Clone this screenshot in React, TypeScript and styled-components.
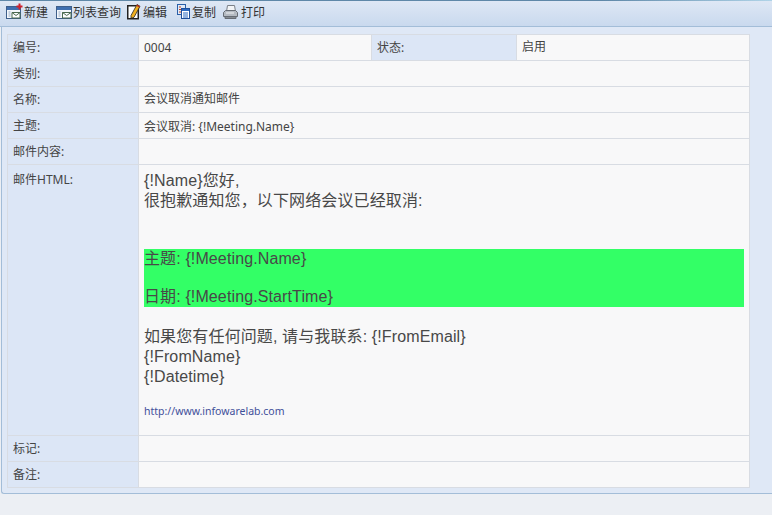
import styled, { createGlobalStyle } from 'styled-components';

const GlobalStyle = createGlobalStyle`
  html, body {
    margin: 0;
    padding: 0;
    background: #eceff4;
  }
  body {
    font-family: 'Noto Sans', 'Noto Sans CJK SC', sans-serif;
  }
`;

function NewIcon() {
  return (
    <svg width="17" height="17" viewBox="0 0 17 17">
      <rect x="0.5" y="3.5" width="14" height="12" fill="#f4f7fb" stroke="#3f5f8a" />
      <rect x="1" y="4" width="13" height="3" fill="#3f6fb0" />
      <path d="M6 9.5h8v5.5H6z" fill="#fff" stroke="#4a6a50" />
      <path d="M6 9.5l4 3 4-3" fill="none" stroke="#4a6a50" />
      <path d="M2.500 9h2M2.500 11h2M2.500 13h2" stroke="#8fa5c0" />
      <path d="M13.500 0.500v6M10.500 3.500h6" stroke="#d0202c" strokeWidth="2" />
    </svg>
  );
}

function ListIcon() {
  return (
    <svg width="16" height="17" viewBox="0 0 16 17">
      <rect x="0.500" y="3.500" width="15" height="12" fill="#f4f7fb" stroke="#3f5f8a" />
      <rect x="1" y="4" width="14" height="3" fill="#3f6fb0" />
      <path d="M6.500 9.500h8.500v5.500H6.500z" fill="#fff" stroke="#4a6a50" />
      <path d="M6.500 9.500l4.200 3 4.300-3" fill="none" stroke="#4a6a50" />
      <path d="M2.500 9h2M2.500 11h2M2.500 13h2" stroke="#8fa5c0" />
    </svg>
  );
}

function EditIcon() {
  return (
    <svg width="14" height="17" viewBox="0 0 14 17">
      <rect x="0.750" y="2.750" width="10.500" height="13" fill="#fff" stroke="#222" strokeWidth="1.500" />
      <path d="M4 12.500L10 1.500l3 1.800-6 11-3 1z" fill="#f0b020" stroke="#222" strokeWidth="0.800" />
      <path d="M10 1.500l3 1.800-.8 1.300-3-1.800z" fill="#b03020" />
    </svg>
  );
}

function CopyIcon() {
  return (
    <svg width="13" height="15" viewBox="0 0 13 15">
      <rect x="0.500" y="0.500" width="8" height="10" fill="#dfeaf8" stroke="#2a5fa8" />
      <path d="M2 3h2M2 5.500h2M2 8h2" stroke="#c04020" />
      <rect x="4.500" y="4.500" width="8" height="10" fill="#fff" stroke="#1f4f9a" />
      <rect x="5" y="5" width="7" height="2" fill="#2a69c0" />
      <path d="M6 9h5M6 11h5M6 13h5" stroke="#2a69c0" />
    </svg>
  );
}

function PrintIcon() {
  return (
    <svg width="15" height="14" viewBox="0 0 15 14">
      <path d="M4.500 0.500h7l1 6h-9z" fill="#f2f4f6" stroke="#7a8088" />
      <path d="M0.500 7.500l2-2h10l2 2v4h-14z" fill="#b4bac2" stroke="#666c74" />
      <path d="M2 11.500h11v2H2z" fill="#858b93" stroke="#666c74" />
      <path d="M3 8h8" stroke="#eef0f2" />
    </svg>
  );
}

const tools = [
  { key: 'new', label: '新建', icon: <NewIcon />, iconGap: 1, after: 8 },
  { key: 'list', label: '列表查询', icon: <ListIcon />, iconGap: 1, after: 6 },
  { key: 'edit', label: '编辑', icon: <EditIcon />, iconGap: 2, after: 10 },
  { key: 'copy', label: '复制', icon: <CopyIcon />, iconGap: 2, after: 7 },
  { key: 'print', label: '打印', icon: <PrintIcon />, iconGap: 3, after: 0 },
];

export default function App() {
  return (
    <Page>
      <GlobalStyle />
      <Toolbar>
        {tools.map(tool => (
          <ToolButton key={tool.key} $iconGap={tool.iconGap} $after={tool.after}>
            {tool.icon}
            <span>{tool.label}</span>
          </ToolButton>
        ))}
      </Toolbar>
      <Panel>
        <Sheet>
          <colgroup>
            <col width="131" />
            <col width="233" />
            <col width="145" />
            <col />
          </colgroup>
          <tbody>
            <Row>
              <Label>编号:</Label>
              <Value>0004</Value>
              <Label>状态:</Label>
              <Value $raised>启用</Value>
            </Row>
            <Row>
              <Label>类别:</Label>
              <Value colSpan={3} />
            </Row>
            <Row>
              <Label>名称:</Label>
              <Value colSpan={3} $raised>会议取消通知邮件</Value>
            </Row>
            <Row>
              <Label>主题:</Label>
              <Value colSpan={3}>会议取消: {'{!Meeting.Name}'}</Value>
            </Row>
            <Row>
              <Label>邮件内容:</Label>
              <Value colSpan={3} />
            </Row>
            <tr>
              <TopLabel>邮件HTML:</TopLabel>
              <MailCell colSpan={3}>
                <MailLine>{'{!Name}'}您好,</MailLine>
                <MailLine>很抱歉通知您，以下网络会议已经取消:</MailLine>
                <Highlight>
                  <MailLine>主题: {'{!Meeting.Name}'}</MailLine>
                  <MailBlank />
                  <MailLine>日期: {'{!Meeting.StartTime}'}</MailLine>
                </Highlight>
                <MailLine>如果您有任何问题, 请与我联系: {'{!FromEmail}'}</MailLine>
                <MailLine>{'{!FromName}'}</MailLine>
                <MailLine>{'{!Datetime}'}</MailLine>
                <SiteLink href="#">http://www.infowarelab.com</SiteLink>
              </MailCell>
            </tr>
            <Row>
              <Label>标记:</Label>
              <Value colSpan={3} />
            </Row>
            <Row>
              <Label>备注:</Label>
              <Value colSpan={3} />
            </Row>
          </tbody>
        </Sheet>
      </Panel>
    </Page>
  );
}

const Page = styled.div`
  width: 772px;
  height: 515px;
  overflow: hidden;
  background: #eceff4;
  color: #444;
`;

const Toolbar = styled.div`
  height: 23px;
  display: flex;
  align-items: center;
  padding: 0 0 3px 6px;
  border-bottom: 1px solid #a3bdd8;
  background:
    linear-gradient(90deg, #5f88a8 78%, #b0d4e8) top / 100% 1px no-repeat,
    linear-gradient(#dfe8f5, #c9d9ee);
`;

const ToolButton = styled.div<{ $iconGap: number; $after: number }>`
  display: flex;
  align-items: center;
  gap: ${props => props.$iconGap}px;
  margin-right: ${props => props.$after}px;
  font-size: 12px;
  color: #333;
`;

const Panel = styled.div`
  height: 459px;
  margin-left: 1px;
  padding: 7px 21px 0 5px;
  background: #dfe8f6;
  border-left: 1px solid #a3bdd8;
  border-bottom: 1px solid #a3bdd8;
  border-radius: 0 0 0 3px;
`;

const Sheet = styled.table`
  width: 743px;
  table-layout: fixed;
  border-collapse: collapse;
`;

const Row = styled.tr`
  height: 26px;
`;

const Label = styled.td`
  padding: 0 0 1px 5px;
  border: 1px solid #d8dce3;
  background: #dce6f6;
  font-size: 12px;
  color: #444;
`;

const TopLabel = styled(Label)`
  vertical-align: top;
  padding-top: 5px;
`;

const Value = styled.td<{ $raised?: boolean }>`
  padding: ${props => (props.$raised ? '0 0 4px 5px' : '0 0 0 5px')};
  border: 1px solid #d8dce3;
  background: #f8f8f9;
  font-size: 12px;
  color: #444;
`;

const MailCell = styled(Value)`
  height: 264px;
  vertical-align: top;
  padding: 6px 5px 0 5px;
`;

const MailLine = styled.div`
  font-family: 'Liberation Sans', 'Noto Sans CJK SC', sans-serif;
  font-size: 16px;
  line-height: 20px;
  letter-spacing: 0.12px;
  color: #484848;
`;

const MailBlank = styled.div`
  height: 18px;
`;

const Highlight = styled.div`
  height: 58px;
  margin-top: 38px;
  margin-bottom: 20px;
  background: #33ff66;
`;

const SiteLink = styled.a`
  display: block;
  margin-top: 17px;
  font-size: 10.500px;
  color: #3f4f9a;
  text-decoration: none;
`;
